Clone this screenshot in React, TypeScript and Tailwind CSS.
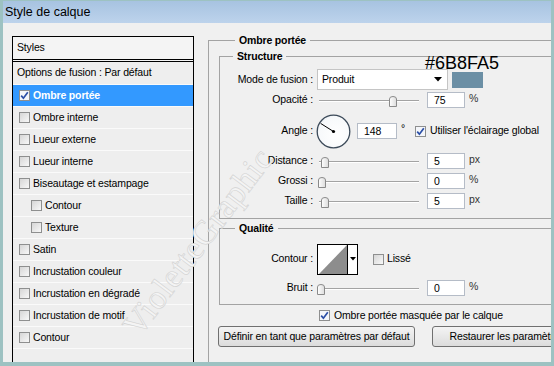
import React from 'react'

type Item = { label: string; checked?: boolean; selected?: boolean; indent?: boolean }

const items: Item[] = [
  { label: 'Ombre portée', checked: true, selected: true },
  { label: 'Ombre interne' },
  { label: 'Lueur externe' },
  { label: 'Lueur interne' },
  { label: 'Biseautage et estampage' },
  { label: 'Contour', indent: true },
  { label: 'Texture', indent: true },
  { label: 'Satin' },
  { label: 'Incrustation couleur' },
  { label: 'Incrustation en dégradé' },
  { label: 'Incrustation de motif' },
  { label: 'Contour' },
]

function Check({ checked }: { checked?: boolean }) {
  return (
    <span
      className={`w-[11px] h-[11px] shrink-0 border border-[#8e8f8f] flex items-center justify-center ${
        checked ? 'bg-[#f4f6fa]' : 'bg-gradient-to-br from-[#d6d6d6] to-[#f8f8f8]'
      }`}
    >
      {checked && (
        <svg width="9" height="9" viewBox="0 0 9 9">
          <path d="M1.2 4.6 L3.4 7.2 L7.8 1.2" stroke="#2a4ea6" strokeWidth="1.7" fill="none" />
        </svg>
      )}
    </span>
  )
}

function Slider({ pos }: { pos: number }) {
  return (
    <div className="relative h-[16px] w-[102px] shrink-0">
      <div className="absolute left-[2px] right-0 top-[8px] h-[2px] border-t border-[#a3a3a3] bg-white" />
      <svg className="absolute top-[4px]" style={{ left: pos }} width="8" height="11" viewBox="0 0 8 11">
        <defs>
          <linearGradient id="thumb" x1="0" y1="0" x2="1" y2="0">
            <stop offset="0" stopColor="#ffffff" />
            <stop offset="1" stopColor="#dcdcdc" />
          </linearGradient>
        </defs>
        <path d="M0.5 3 Q0.5 0.5 4 0.5 Q7.5 0.5 7.5 3 L7.5 10.5 L0.5 10.5 Z" fill="url(#thumb)" stroke="#8a8a8a" />
      </svg>
    </div>
  )
}

function Field({ value, w = 'w-[38px]' }: { value: string; w?: string }) {
  return (
    <div className={`${w} h-[16px] shrink-0 border border-[#b5bcc7] bg-white pl-[6px] leading-[14px]`}>{value}</div>
  )
}

function Label({ children }: { children: React.ReactNode }) {
  return <span className="w-[93px] shrink-0 text-right">{children}</span>
}

function SliderRow({ label, pos, value, unit, mt }: { label: string; pos: number; value: string; unit: string; mt: string }) {
  return (
    <div className={`flex items-center h-[16px] ${mt}`}>
      <Label>{label}</Label>
      <div className="ml-[4px]">
        <Slider pos={pos} />
      </div>
      <div className="ml-[8px]">
        <Field value={value} />
      </div>
      <span className="ml-[4px] self-start leading-[12px] text-[#333]">{unit}</span>
    </div>
  )
}

export default function App() {
  return (
    <div className="w-[554px] h-[366px] bg-[#9dc2c2] pt-[1px] px-[3px] pb-[4px] overflow-hidden font-['Liberation_Sans',Arial,sans-serif] text-black">
      <div className="h-[22px] bg-gradient-to-b from-[#a7c3e1] to-[#bdd3ec] pl-[2px] flex items-center text-[12.5px]">
        Style de calque
      </div>
      <div className="relative h-[339px] bg-[#f0f0f0] flex overflow-hidden text-[10.5px] tracking-[-0.15px]">
        <div className="ml-[9px] mt-[13px] w-[182px] h-[340px] shrink-0 border border-black flex flex-col bg-[#eeeeee]">
          <div className="h-[25px] shrink-0 border-b-[3px] border-double border-black bg-[#f4f4f4] pl-[4px] flex items-center">
            Styles
          </div>
          <div className="h-[22px] shrink-0 pl-[4px] flex items-center">Options de fusion : Par défaut</div>
          {items.map((it, i) => (
            <div
              key={i}
              className={`h-[22px] shrink-0 flex items-center gap-[3px] border-t border-[#fafafa] ${
                it.indent ? 'pl-[18px]' : 'pl-[6px]'
              } ${it.selected ? 'bg-[#3399ff] text-white font-bold border-[#3399ff]' : ''}`}
            >
              <Check checked={it.checked} />
              <span>{it.label}</span>
            </div>
          ))}
          <div className="border-t border-[#fafafa]" />
        </div>

        <div className="ml-[14px] mt-[11px] shrink-0">
          <fieldset className="w-[360px] border border-[#a3a3a3] pl-[10px] pb-[40px]">
            <legend className="ml-[16px] px-[4px] font-bold leading-[13px]">Ombre portée</legend>

            <fieldset className="mt-[3px] border border-[#a3a3a3] pb-[9px]">
              <legend className="ml-[13px] px-[4px] font-bold leading-[13px]">Structure</legend>

              <div className="flex items-center h-[21px] mt-[6px]">
                <Label>Mode de fusion :</Label>
                <div className="ml-[4px] w-[131px] h-[21px] border border-[#c5c5c5] bg-white flex items-center justify-between pl-[4px] pr-[5px]">
                  <span>Produit</span>
                  <svg width="8" height="5" viewBox="0 0 8 5">
                    <path d="M0 0 L8 0 L4 4.5 Z" fill="#000" />
                  </svg>
                </div>
                <div className="relative ml-[4px] w-[31px] h-[16px] bg-[#6B8FA5]">
                  <span className="absolute bottom-full left-[-27px] text-[18px] leading-[18px] tracking-normal font-normal whitespace-nowrap">
                    #6B8FA5
                  </span>
                </div>
              </div>

              <SliderRow label="Opacité :" pos={72} value="75" unit="%" mt="mt-[2px]" />

              <div className="flex items-center h-[34px] mt-[6px]">
                <Label>Angle :</Label>
                <svg className="ml-[3px] shrink-0" width="35" height="35" viewBox="0 0 35 35">
                  <defs>
                    <radialGradient id="dial" cx="0.6" cy="0.6" r="0.7">
                      <stop offset="0" stopColor="#ffffff" />
                      <stop offset="0.8" stopColor="#f7f9fb" />
                      <stop offset="1" stopColor="#d9dfe6" />
                    </radialGradient>
                  </defs>
                  <circle cx="17.5" cy="17.5" r="16.3" fill="url(#dial)" stroke="#3d4b5a" strokeWidth="1.3" />
                  <line x1="17.5" y1="17.5" x2="4.6" y2="9.4" stroke="#000" strokeWidth="1" />
                  <circle cx="17.5" cy="17.5" r="1.6" fill="#000" />
                </svg>
                <div className="ml-[6px]">
                  <Field value="148" w="w-[40px]" />
                </div>
                <span className="ml-[4px] self-start mt-[9px] leading-[10px]">°</span>
                <span className="ml-[10px]">
                  <Check checked />
                </span>
                <span className="ml-[4px]">Utiliser l'éclairage global</span>
              </div>

              <SliderRow label="Distance :" pos={4} value="5" unit="px" mt="mt-[5px]" />
              <SliderRow label="Grossi :" pos={1} value="0" unit="%" mt="mt-[4px]" />
              <SliderRow label="Taille :" pos={4} value="5" unit="px" mt="mt-[4px]" />
            </fieldset>

            <fieldset className="mt-[3px] border border-[#a3a3a3] pb-[8px]">
              <legend className="ml-[15px] px-[4px] font-bold leading-[13px]">Qualité</legend>

              <div className="flex items-center h-[30px] mt-[9px]">
                <Label>Contour :</Label>
                <div className="ml-[4px] w-[41px] h-[31px] border border-black flex bg-white shrink-0">
                  <svg width="29" height="29" viewBox="0 0 29 29">
                    <polygon points="1,29 29,0 29,29" fill="#8d8d8d" />
                  </svg>
                  <div className="flex-1 border-l border-black flex items-center justify-center">
                    <svg width="6" height="4" viewBox="0 0 6 4">
                      <path d="M0 0 L6 0 L3 3.5 Z" fill="#000" />
                    </svg>
                  </div>
                </div>
                <span className="ml-[15px]">
                  <Check />
                </span>
                <span className="ml-[3px]">Lissé</span>
              </div>

              <SliderRow label="Bruit :" pos={0} value="0" unit="%" mt="mt-[6px]" />
            </fieldset>

            <div className="flex items-center h-[11px] mt-[5px] ml-[100px]">
              <Check checked />
              <span className="ml-[4px]">Ombre portée masquée par le calque</span>
            </div>

            <div className="flex mt-[5px] ml-[-1px]">
              <div className="w-[197px] h-[21px] shrink-0 rounded-[3px] border border-[#707070] bg-gradient-to-b from-[#f4f4f4] to-[#dcdcdc] flex items-center justify-center">
                Définir en tant que paramètres par défaut
              </div>
              <div className="ml-[17px] w-[150px] h-[21px] shrink-0 rounded-[3px] border border-[#707070] bg-gradient-to-b from-[#f4f4f4] to-[#dcdcdc] flex items-center justify-center">
                Restaurer les paramètres
              </div>
            </div>
          </fieldset>
        </div>

        <span className="absolute left-[75px] top-[203px] w-[240px] text-center -rotate-[53deg] font-['Liberation_Serif',serif] text-[34px] leading-[32px] tracking-[0.5px] text-[#f4f4f4] [-webkit-text-stroke:0.6px_#d2d2d2] pointer-events-none">
          VioletteGraphic
        </span>
      </div>
    </div>
  )
}
